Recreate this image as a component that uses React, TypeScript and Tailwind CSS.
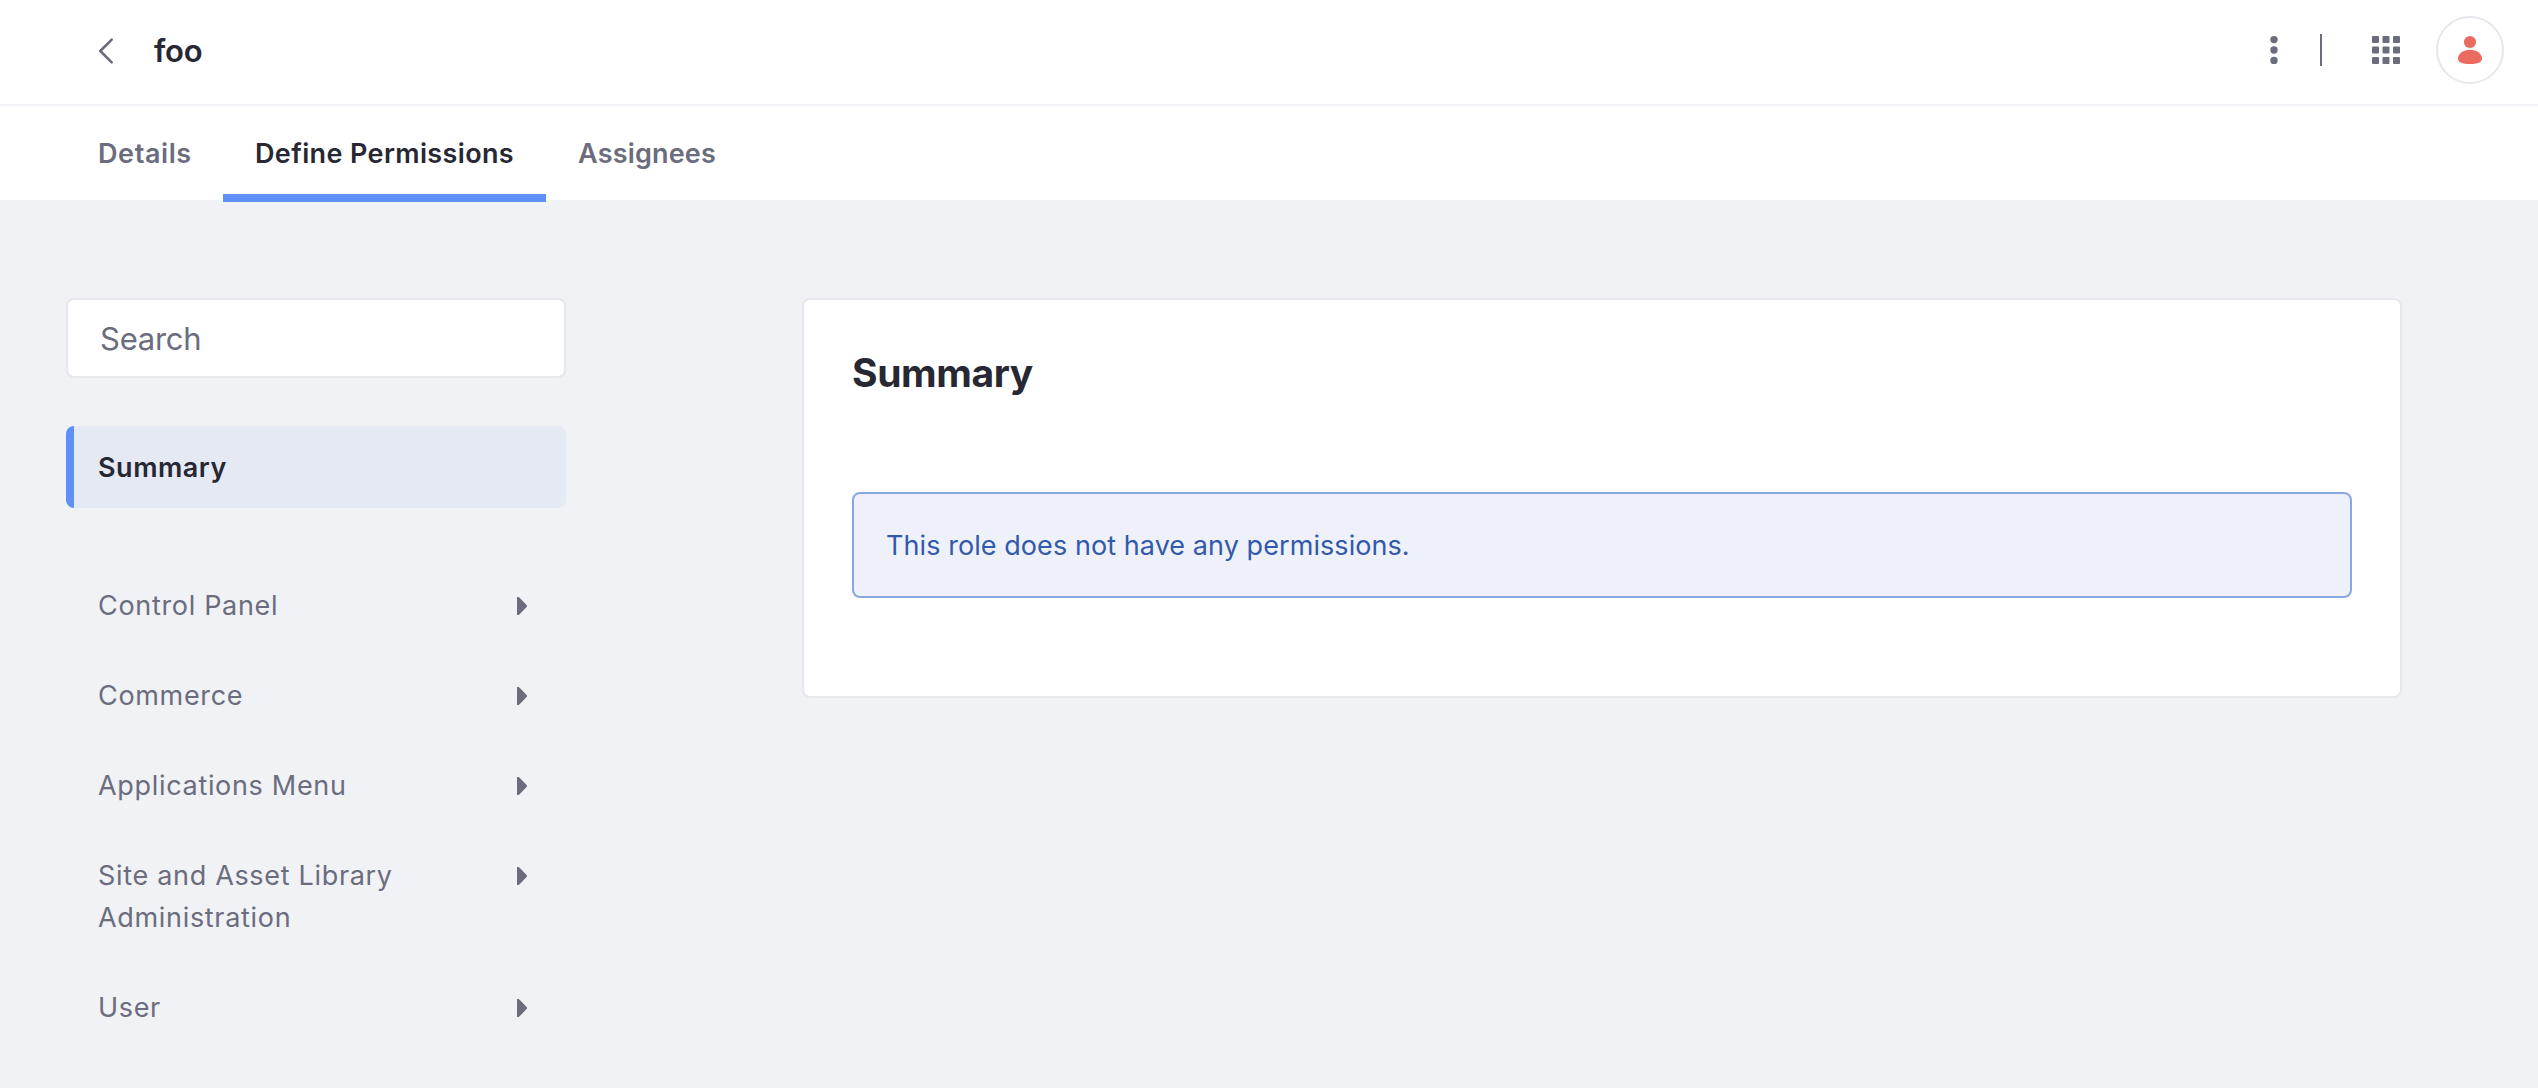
const permissionGroups = [
  'Control Panel',
  'Commerce',
  'Applications Menu',
  'Site and Asset Library Administration',
  'User',
];

function ChevronLeft() {
  return (
    <svg className="h-8 w-8" viewBox="0 0 32 32" fill="none" stroke="currentColor" strokeWidth="2.6" strokeLinecap="round" strokeLinejoin="round">
      <path d="M21.7 4.7 10.3 16l11.4 11.3" />
    </svg>
  );
}

function CaretRight() {
  return (
    <svg className="h-[41px] w-[11px] shrink-0" viewBox="0 0 11 41" fill="currentColor">
      <path d="M0 12h1.200c.5 0 .9.2 1.200.5l7.200 7.500c.6.6.6 1.400 0 2l-7.200 7.500c-.3.3-.7.5-1.200.5H0z" />
    </svg>
  );
}

function MoreDots() {
  return (
    <svg className="h-8 w-8" viewBox="0 0 32 32" fill="currentColor">
      <circle cx="16" cy="5.6" r="3.7" />
      <circle cx="16" cy="16" r="3.7" />
      <circle cx="16" cy="26.4" r="3.7" />
    </svg>
  );
}

function AppsGrid() {
  return (
    <svg className="h-7 w-7" viewBox="0 0 28 28" fill="currentColor">
      {[0, 10.5, 21].map((y) => [0, 10.5, 21].map((x) => <rect key={`${x}-${y}`} x={x} y={y} width="7" height="7" rx="1" />))}
    </svg>
  );
}

function UserAvatar() {
  return (
    <div className="flex h-[68px] w-[68px] items-center justify-center rounded-full border-2 border-[#e7e7ed] text-[#eb6b60]">
      <svg className="h-8 w-8" viewBox="0 0 32 32" fill="currentColor">
        <circle cx="16" cy="8" r="6.1" />
        <path d="M16 15.700c6.600 0 12 4 12 8.800 0 3.900-4.400 5.500-12 5.500S4 28.400 4 24.500c0-4.800 5.400-8.800 12-8.800z" />
      </svg>
    </div>
  );
}

export default function App() {
  return (
    <div className="h-[1088px] overflow-hidden bg-[#f1f2f5] font-['Inter',sans-serif] text-[#272833]">
      <header className="flex h-[106px] items-start justify-between border-b-2 border-[#f1f2f5] bg-white pr-[34px] pl-[90px]">
        <div className="flex h-[101px] items-center">
          <span className="text-[#6b6c7e]"><ChevronLeft /></span>
          <h1 className="ml-8 text-[31px] leading-[40px] font-semibold tracking-[-0.2px]">foo</h1>
        </div>
        <div className="flex h-[100px] items-center text-[#6b6c7e]">
          <MoreDots />
          <div className="ml-[30px] h-8 w-0.5 bg-[#6b6c7e]" />
          <div className="ml-[50px]"><AppsGrid /></div>
          <div className="ml-9"><UserAvatar /></div>
        </div>
      </header>

      <nav className="flex h-[94px] bg-white pl-[66px] text-[27px] leading-[42px] font-semibold text-[#6b6c7e]">
        <a className="w-[157px] pt-[27px] pl-8 tracking-[0.6px]">Details</a>
        <a className="h-24 w-[323px] border-b-8 border-[#5f90f8] pt-[27px] pl-8 tracking-[0.36px] text-[#272833]">Define Permissions</a>
        <a className="pt-[27px] pl-8 tracking-[0.18px]">Assignees</a>
      </nav>

      <main className="flex items-start pt-[98px] pl-[66px]">
        <aside className="w-[500px]">
          <input
            className="block h-20 w-full rounded-lg border-2 border-[#e7e7ed] bg-white px-8 text-[31px] tracking-[-0.25px] outline-none placeholder:text-[#6b6c7e] placeholder:opacity-100"
            placeholder="Search"
          />
          <div className="mt-12 h-[82px] rounded-lg border-l-8 border-[#5f90f8] bg-[#e5e9f4] pt-[21px] pl-6 text-[27px] leading-[42px] font-semibold tracking-[0.53px]">
            Summary
          </div>
          <ul className="mt-[53px] text-[27px] leading-[42px] tracking-[0.68px] text-[#6b6c7e]">
            {permissionGroups.map((group) => (
              <li key={group} className="flex items-start justify-between py-6 pr-[38px] pl-8">
                <span className="w-[340px]">{group}</span>
                <CaretRight />
              </li>
            ))}
          </ul>
        </aside>

        <section className="ml-[236px] h-[400px] w-[1600px] rounded-lg border-2 border-[#e7e7ed] bg-white px-12">
          <h2 className="mt-[47px] text-[39px] leading-[52px] font-bold tracking-[-0.38px]">Summary</h2>
          <div className="mt-[93px] h-[106px] rounded-lg border-2 border-[#89a7e0] bg-[#eef1fa] px-8 pt-[31px] text-[27px] leading-[42px] tracking-[0.07px] text-[#3359ab]">
            This role does not have any permissions.
          </div>
        </section>
      </main>
    </div>
  );
}
